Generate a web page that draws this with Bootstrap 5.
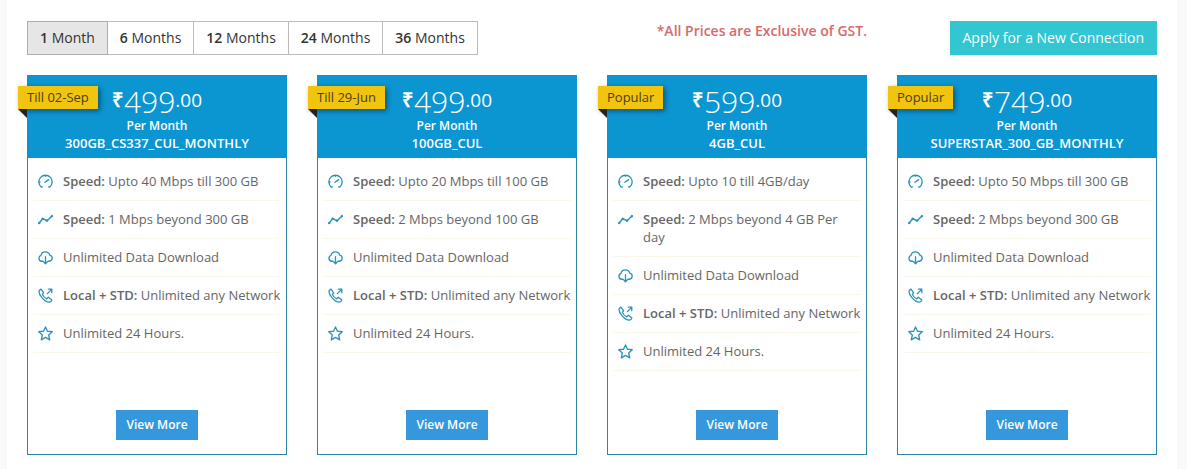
<!DOCTYPE html>
<html lang="en">
<head>
<meta charset="utf-8">
<meta name="viewport" content="width=device-width, initial-scale=1">
<title>Broadband plans</title>
<link href="https://cdn.jsdelivr.net/npm/bootstrap@5.3.0/dist/css/bootstrap.min.css" rel="stylesheet">
<style>
  body { background: #f9f9f9; font-family: "Open Sans", sans-serif; font-size: 13px; line-height: 18px; color: #666; padding: 0 10px 0 7px; }
  .panel { background: #fff; padding: 21px 20px 14px; min-height: 100vh; }
  .period { border: 1px solid #bbb; border-radius: 0; color: #333; font-size: 14px; line-height: 20px; padding: 6px 12px; }
  .period b { font-weight: 600; }
  .period.active, .period.btn.active { background: #e6e6e6; border-color: #adadad; color: #333; }
  .gst-note { color: #d9696b; font-size: 14px; line-height: 20px; font-weight: 600; }
  .apply { background: #32c5d2; border: 1px solid #32c5d2; border-radius: 0; color: #fff; font-size: 14px; line-height: 20px; padding: 6px 12px; }
  .toolbar { --bs-gutter-x: 30px; margin-bottom: 20px; }
  .plans { --bs-gutter-x: 30px; row-gap: 20px; }
  .plan { border: 1px solid #2c85a5; padding-bottom: 14px; }
  .plan-head { background: #0b95d1; color: #fff; margin: -1px -1px 0; padding: 10px 5px 6px; font-weight: 600; }
  .price { font-size: 19px; line-height: 30px; font-weight: 400; }
  .price .rupee { font-weight: 700; font-size: 20px; margin-right: 1px; }
  .price .whole { font-size: 30px; line-height: 33px; font-weight: 300; }
  .per { font-size: 12px; line-height: 16px; }
  .ribbon { left: -10px; top: 10px; background: #f1c40f; color: #4d4010; line-height: 23px; padding: 0 9px; box-shadow: 2px 2px 5px rgba(0,0,0,.45); }
  .ribbon::after { content: ""; position: absolute; left: 0; top: 100%; border-top: 9px solid #222; border-left: 9px solid transparent; }
  .features { padding: 5px 5px 39px; }
  .features li { border-bottom: 1px solid #fbf8ea; padding: 9px 0 10px 5px; gap: 10px; }
  .features b { font-weight: 600; }
  .features svg { width: 15px; height: 15px; margin-top: 2px; fill: none; stroke: #2793bd; stroke-width: 1.4; stroke-linecap: round; stroke-linejoin: round; }
  .more { background: #3598dc; border: 0; border-radius: 0; color: #fff; font-size: 12px; line-height: 18px; font-weight: 600; padding: 6px 10px; }
  .more:hover, .apply:hover { background: #217ebd; color: #fff; }
</style>
</head>
<body>
<svg class="d-none" aria-hidden="true">
  <symbol id="gauge" viewBox="0 0 16 16"><path d="M4.6 13.8L3.6 14A7.1 7.1 0 1 1 12.4 14L11.4 13.8M1.2 8.4H2.2M8 1.4V2.4M7.4 8.8L11.4 6"/></symbol>
  <symbol id="trend" viewBox="0 0 16 16"><path stroke-width="1.5" d="M1 12L5 7.2L9.5 9.3L15 4.3"/><g fill="#2793bd" stroke-width=".6"><circle cx="1.2" cy="11.8" r=".9"/><circle cx="5" cy="7.2" r="1"/><circle cx="9.5" cy="9.3" r="1"/><circle cx="14.7" cy="4.5" r="1"/></g></symbol>
  <symbol id="cloud" viewBox="0 0 16 16"><path d="M5.3 12H3.8A3.2 3.2 0 0 1 3.2 5.8A4.8 4.8 0 0 1 12.5 5.5A3.3 3.3 0 0 1 12.2 12H10.7M8 7.2V14.5M6.2 12.8L8 14.6L9.8 12.8"/></symbol>
  <symbol id="call" viewBox="0 0 16 16"><path d="M3.2 1.2L1.3 2.6C0 6.8 7.2 15.2 12.3 15.1C13.5 15 14.5 13.8 14.8 12.7L11 9.9L9.3 11.5C7.5 10.8 5.3 8.5 4.7 6.8L6 5.1ZM10 6L14.5 1.5M11 1.2H14.7V5"/></symbol>
  <symbol id="star" viewBox="0 0 16 16"><path d="M8 1L10.1 5.6L15.2 6.1L11.4 9.6L12.5 14.8L8 12.2L3.5 14.8L4.6 9.6L.8 6.1L5.9 5.6Z"/></symbol>
</svg>
<main class="panel">
  <div class="row toolbar align-items-start">
    <div class="col-12 col-lg-5">
      <div class="btn-group" role="group" aria-label="Billing period">
        <button type="button" class="btn period active" aria-pressed="true"><b>1</b> Month</button>
        <button type="button" class="btn period"><b>6</b> Months</button>
        <button type="button" class="btn period"><b>12</b> Months</button>
        <button type="button" class="btn period"><b>24</b> Months</button>
        <button type="button" class="btn period"><b>36</b> Months</button>
      </div>
    </div>
    <div class="col-6 col-lg-4 text-end gst-note">*All Prices are Exclusive of GST.</div>
    <div class="col-6 col-lg-3 text-end"><a href="#" class="btn apply">Apply for a New Connection</a></div>
  </div>
  <div class="row plans row-cols-1 row-cols-sm-2 row-cols-lg-4" id="plans"></div>
</main>
<script src="https://cdn.jsdelivr.net/npm/bootstrap@5.3.0/dist/js/bootstrap.bundle.min.js"></script>
<script>
  const plans = [
    { tag: 'Till 02-Sep', price: '499', name: '300GB_CS337_CUL_MONTHLY', speed: 'Upto 40 Mbps till 300 GB', beyond: '1 Mbps beyond 300 GB' },
    { tag: 'Till 29-Jun', price: '499', name: '100GB_CUL', speed: 'Upto 20 Mbps till 100 GB', beyond: '2 Mbps beyond 100 GB' },
    { tag: 'Popular', price: '599', name: '4GB_CUL', speed: 'Upto 10 till 4GB/day', beyond: '2 Mbps beyond 4 GB Per day' },
    { tag: 'Popular', price: '749', name: 'SUPERSTAR_300_GB_MONTHLY', speed: 'Upto 50 Mbps till 300 GB', beyond: '2 Mbps beyond 300 GB' }
  ];
  const item = (icon, text) => `<li class="d-flex"><svg class="flex-shrink-0" aria-hidden="true"><use href="#${icon}"/></svg><span>${text}</span></li>`;
  document.getElementById('plans').innerHTML = plans.map(p => `
    <div class="col">
      <article class="plan position-relative h-100 d-flex flex-column">
        <span class="ribbon position-absolute">${p.tag}</span>
        <header class="plan-head text-center">
          <div class="price d-flex justify-content-center align-items-start"><span class="rupee">₹</span><span class="whole">${p.price}</span><span>.00</span></div>
          <div class="per">Per Month</div>
          <div>${p.name}</div>
        </header>
        <ul class="features list-unstyled mb-0 flex-grow-1">
          ${item('gauge', '<b>Speed:</b> ' + p.speed)}
          ${item('trend', '<b>Speed:</b> ' + p.beyond)}
          ${item('cloud', 'Unlimited Data Download')}
          ${item('call', '<b>Local + STD:</b> Unlimited any Network')}
          ${item('star', 'Unlimited 24 Hours.')}
        </ul>
        <button type="button" class="btn more align-self-center">View More</button>
      </article>
    </div>`).join('');
</script>
</body>
</html>
